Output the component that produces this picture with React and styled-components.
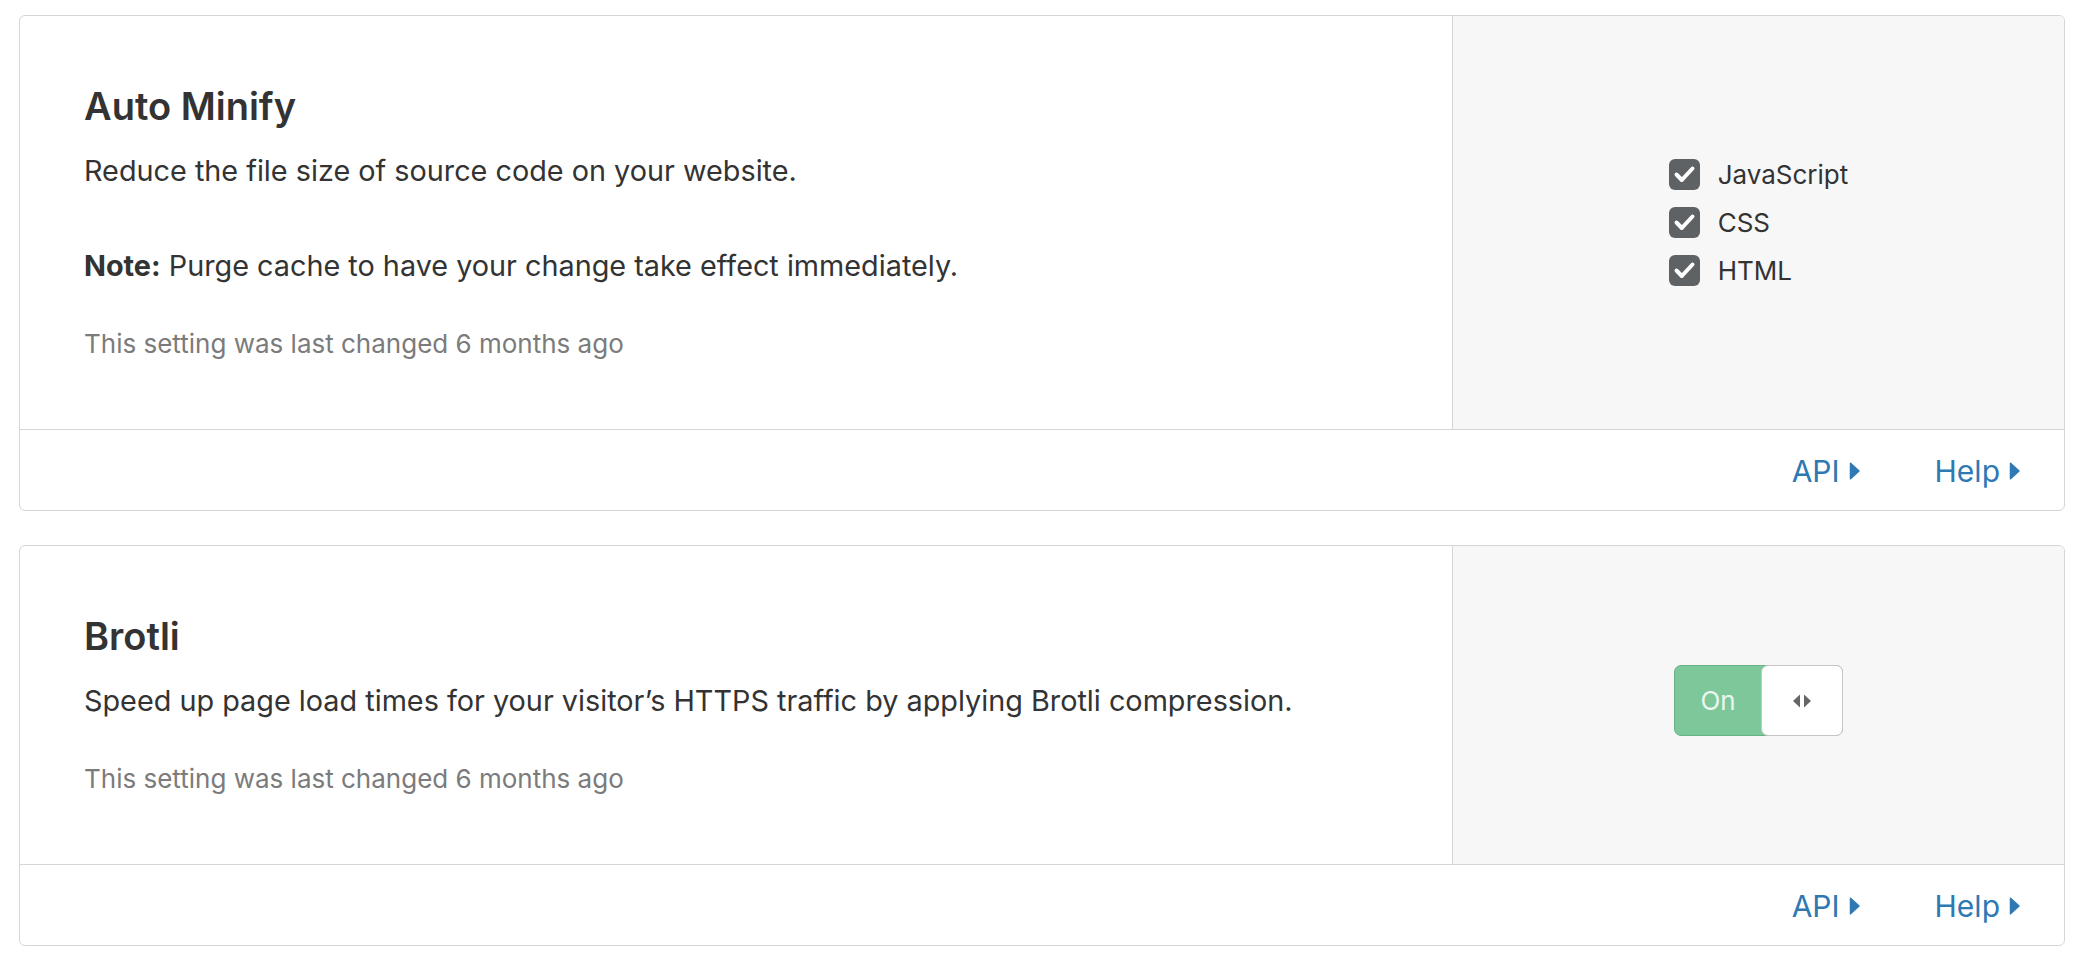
import React from "react";
import styled, { createGlobalStyle } from "styled-components";

const GlobalStyle = createGlobalStyle`
  html, body {
    margin: 0;
    padding: 0;
    background: #ffffff;
  }
  body {
    font-family: "Inter", "Noto Sans", "Liberation Sans", sans-serif;
    color: #333333;
  }
  * { box-sizing: border-box; }
`;

const Page = styled.main`
  display: flex;
  flex-direction: column;
  gap: 34px;
  padding: 15px 17px 0 19px;
`;

const Card = styled.section`
  background: #ffffff;
  border: 1px solid #d6d6d6;
  border-radius: 6px;
  overflow: hidden;
`;

const CardBody = styled.div`
  display: grid;
  grid-template-columns: 1432px 1fr;
`;

const Info = styled.div`
  padding: 68px 64px 67px 64px;
`;

const Title = styled.h2`
  margin: 0;
  font-size: 38px;
  line-height: 44px;
  font-weight: 600;
  color: #333333;
`;

const Text = styled.p`
  margin: ${(p) => p.$gap}px 0 0 0;
  font-size: 28.8px;
  line-height: 40px;
  font-weight: 400;
  color: #333333;

  strong {
    font-weight: 700;
  }
`;

const Meta = styled.p`
  margin: 40px 0 0 0;
  font-size: 26px;
  line-height: 36px;
  color: #7b7b7b;
`;

const Control = styled.div`
  background: #f7f7f7;
  border-left: 1px solid #d6d6d6;
  display: flex;
  align-items: center;
  justify-content: center;
`;

const CheckList = styled.div`
  display: flex;
  flex-direction: column;
  gap: 17px;
`;

const CheckRow = styled.label`
  display: flex;
  align-items: center;
  gap: 18px;
  font-size: 26px;
  line-height: 31px;
  color: #333333;
`;

const CheckBox = styled.span`
  width: 31px;
  height: 31px;
  border-radius: 6px;
  background: #5f6265;
  display: flex;
  align-items: center;
  justify-content: center;
  flex: none;
`;

const Toggle = styled.div`
  display: flex;
  width: 169px;
  height: 71px;
  margin-bottom: 9px;
  background: #7dc79b;
  border: 1px solid #66b385;
  border-radius: 7px;
`;

const ToggleLabel = styled.span`
  flex: 1;
  display: flex;
  align-items: center;
  justify-content: center;
  font-size: 26px;
  color: #e9f7ed;
`;

const Knob = styled.span`
  width: 82px;
  margin: -1px -1px -1px 0;
  background: #ffffff;
  border: 1px solid #c6c6c6;
  border-radius: 7px;
  display: flex;
  align-items: center;
  justify-content: center;
`;

const CardFooter = styled.footer`
  border-top: 1px solid #d6d6d6;
  height: 81px;
  display: flex;
  align-items: center;
  justify-content: flex-end;
  gap: 75px;
  padding: 2px 44px 0 0;
`;

const FooterLink = styled.a`
  display: inline-flex;
  align-items: center;
  gap: 9px;
  font-size: 30px;
  line-height: 40px;
  color: #2f79b3;
  text-decoration: none;
  cursor: pointer;
`;

const Caret = () => (
  <svg width="11" height="18" viewBox="0 0 11 18" aria-hidden="true">
    <path d="M1.5 1.2 L10 9 L1.5 16.8 Z" fill="#2f79b3" stroke="#2f79b3" strokeWidth="1.5" strokeLinejoin="round" />
  </svg>
);

const CheckMark = () => (
  <svg width="31" height="31" viewBox="0 0 31 31" aria-hidden="true">
    <path d="M7.5 15.5 L12.8 21 L23.5 9.5" fill="none" stroke="#ffffff" strokeWidth="4" strokeLinecap="round" strokeLinejoin="round" />
  </svg>
);

const Arrows = () => (
  <svg width="20" height="14" viewBox="0 0 20 14" aria-hidden="true">
    <path d="M8 0.5 L1 7 L8 13.5 Z" fill="#666666" />
    <path d="M12 0.5 L19 7 L12 13.5 Z" fill="#666666" />
  </svg>
);

const Footer = () => (
  <CardFooter>
    <FooterLink>
      API
      <Caret />
    </FooterLink>
    <FooterLink>
      Help
      <Caret />
    </FooterLink>
  </CardFooter>
);

const options = ["JavaScript", "CSS", "HTML"];

export default function App() {
  return (
    <>
      <GlobalStyle />
      <Page>
        <Card>
          <CardBody>
            <Info>
              <Title>Auto Minify</Title>
              <Text $gap={23}>Reduce the file size of source code on your website.</Text>
              <Text $gap={55}>
                <strong>Note:</strong> Purge cache to have your change take effect immediately.
              </Text>
              <Meta>This setting was last changed 6 months ago</Meta>
            </Info>
            <Control>
              <CheckList>
                {options.map((o) => (
                  <CheckRow key={o}>
                    <CheckBox>
                      <CheckMark />
                    </CheckBox>
                    {o}
                  </CheckRow>
                ))}
              </CheckList>
            </Control>
          </CardBody>
          <Footer />
        </Card>
        <Card>
          <CardBody>
            <Info>
              <Title>Brotli</Title>
              <Text $gap={23}>
                Speed up page load times for your visitor’s HTTPS traffic by applying Brotli compression.
              </Text>
              <Meta>This setting was last changed 6 months ago</Meta>
            </Info>
            <Control>
              <Toggle>
                <ToggleLabel>On</ToggleLabel>
                <Knob>
                  <Arrows />
                </Knob>
              </Toggle>
            </Control>
          </CardBody>
          <Footer />
        </Card>
      </Page>
    </>
  );
}
